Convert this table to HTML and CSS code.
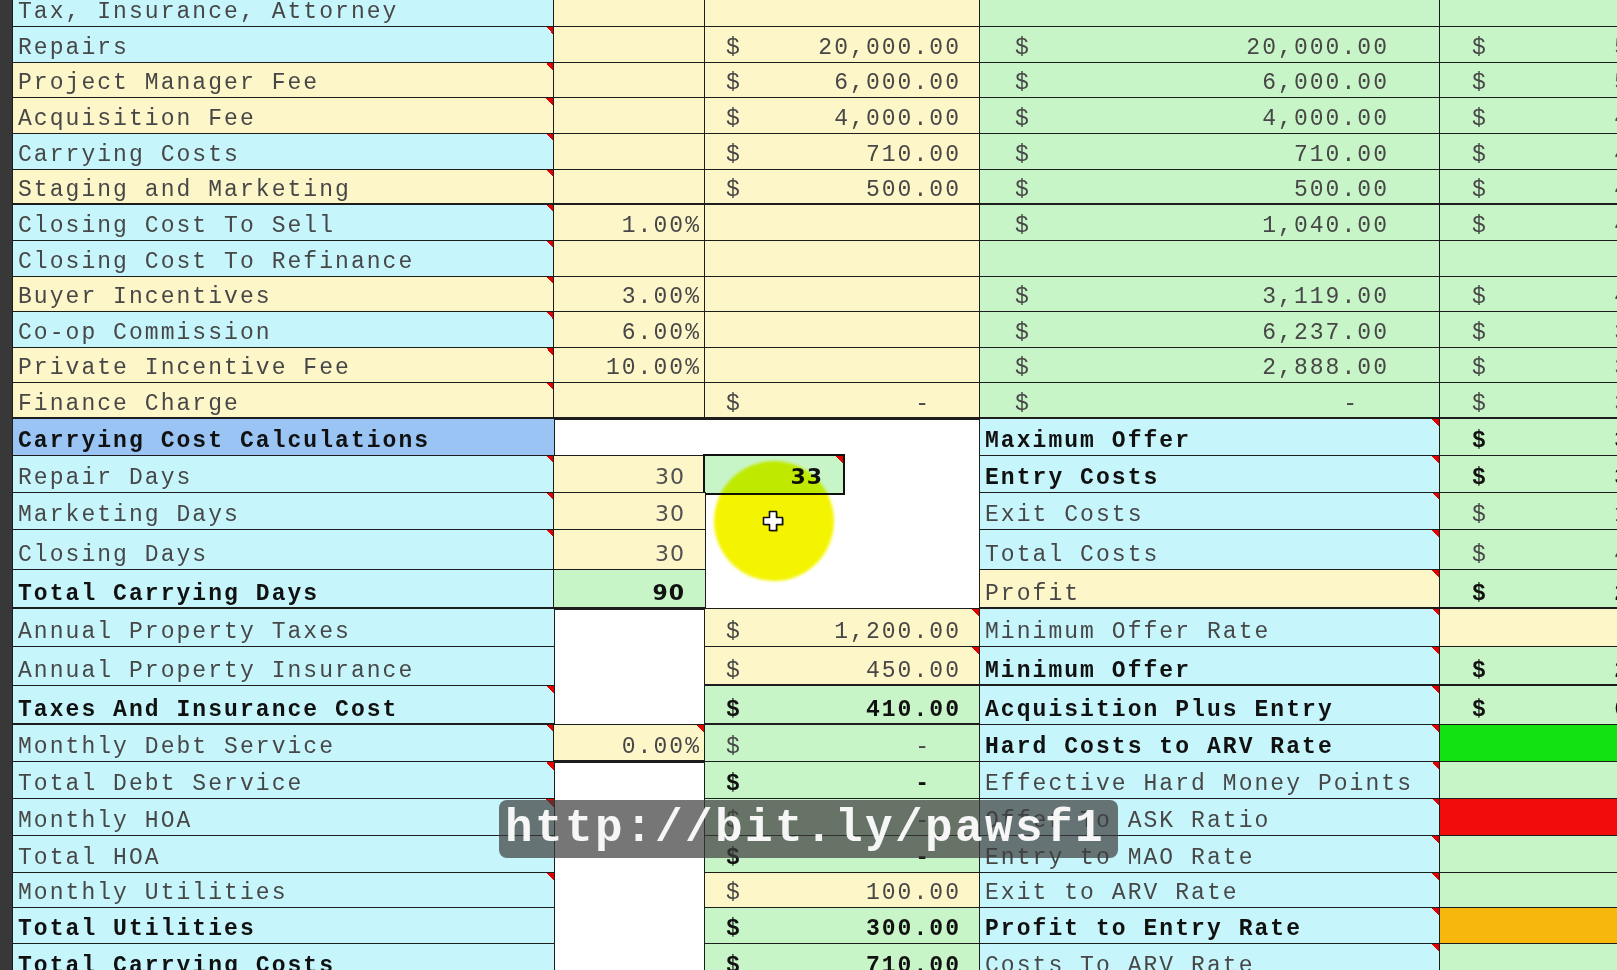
FILE: index.html
```html
<!DOCTYPE html>
<html lang="en">
<head>
<meta charset="utf-8">
<title>Deal Analysis Sheet</title>
<link rel="stylesheet" href="styles.css">
</head>
<body>
<div class="sheet">
  <div class="bar"></div>

  <!-- R0 -->
  <div class="c cy lbl">Tax, Insurance, Attorney</div>
  <div class="c ye"></div>
  <div class="c ye span2"></div>
  <div class="c gr"></div>
  <div class="c gr"></div>

  <!-- R1 -->
  <div class="c cy lbl tri">Repairs</div>
  <div class="c ye"></div>
  <div class="c ye span2 amt colC"><span>$</span><span>20,000.00</span></div>
  <div class="c gr amt colD"><span>$</span><span>20,000.00</span></div>
  <div class="c gr amt colE"><span>$</span><span>52,000.00</span></div>

  <!-- R2 -->
  <div class="c ye lbl tri">Project Manager Fee</div>
  <div class="c ye"></div>
  <div class="c ye span2 amt colC"><span>$</span><span>6,000.00</span></div>
  <div class="c gr amt colD"><span>$</span><span>6,000.00</span></div>
  <div class="c gr amt colE"><span>$</span><span>56,000.00</span></div>

  <!-- R3 -->
  <div class="c ye lbl tri">Acquisition Fee</div>
  <div class="c ye"></div>
  <div class="c ye span2 amt colC"><span>$</span><span>4,000.00</span></div>
  <div class="c gr amt colD"><span>$</span><span>4,000.00</span></div>
  <div class="c gr amt colE"><span>$</span><span>44,000.00</span></div>

  <!-- R4 -->
  <div class="c cy lbl tri">Carrying Costs</div>
  <div class="c ye"></div>
  <div class="c ye span2 amt colC"><span>$</span><span>710.00</span></div>
  <div class="c gr amt colD"><span>$</span><span>710.00</span></div>
  <div class="c gr amt colE"><span>$</span><span>47,100.00</span></div>

  <!-- R5 -->
  <div class="c ye lbl tri tb">Staging and Marketing</div>
  <div class="c ye tb"></div>
  <div class="c ye span2 amt colC tb"><span>$</span><span>500.00</span></div>
  <div class="c gr amt colD tb"><span>$</span><span>500.00</span></div>
  <div class="c gr amt colE tb"><span>$</span><span>45,000.00</span></div>

  <!-- R6 -->
  <div class="c cy lbl tri">Closing Cost To Sell</div>
  <div class="c ye pct">1.00%</div>
  <div class="c ye span2"></div>
  <div class="c gr amt colD"><span>$</span><span>1,040.00</span></div>
  <div class="c gr amt colE"><span>$</span><span>41,040.00</span></div>

  <!-- R7 -->
  <div class="c cy lbl tri">Closing Cost To Refinance</div>
  <div class="c ye"></div>
  <div class="c ye span2"></div>
  <div class="c gr"></div>
  <div class="c gr"></div>

  <!-- R8 -->
  <div class="c ye lbl tri">Buyer Incentives</div>
  <div class="c ye pct">3.00%</div>
  <div class="c ye span2"></div>
  <div class="c gr amt colD"><span>$</span><span>3,119.00</span></div>
  <div class="c gr amt colE"><span>$</span><span>43,119.00</span></div>

  <!-- R9 -->
  <div class="c cy lbl tri">Co-op Commission</div>
  <div class="c ye pct">6.00%</div>
  <div class="c ye span2"></div>
  <div class="c gr amt colD"><span>$</span><span>6,237.00</span></div>
  <div class="c gr amt colE"><span>$</span><span>36,237.00</span></div>

  <!-- R10 -->
  <div class="c ye lbl tri">Private Incentive Fee</div>
  <div class="c ye pct">10.00%</div>
  <div class="c ye span2"></div>
  <div class="c gr amt colD"><span>$</span><span>2,888.00</span></div>
  <div class="c gr amt colE"><span>$</span><span>32,888.00</span></div>

  <!-- R11 -->
  <div class="c ye lbl tri tb">Finance Charge</div>
  <div class="c ye tb"></div>
  <div class="c ye span2 amt colC tb"><span>$</span><span class="dash">-</span></div>
  <div class="c gr amt colD tb"><span>$</span><span class="dash">-</span></div>
  <div class="c gr amt colE tb"><span>$</span><span>30,000.00</span></div>

  <!-- R12 -->
  <div class="c bl lbl b">Carrying Cost Calculations</div>
  <div class="c wh span3"></div>
  <div class="c cy lbl b tri">Maximum Offer</div>
  <div class="c gr amt colE b"><span>$</span><span>35,000.00</span></div>

  <!-- R13 -->
  <div class="c cy lbl tri">Repair Days</div>
  <div class="c ye days">30</div>
  <div class="c gr days b sel tri">33</div>
  <div class="c wh"></div>
  <div class="c cy lbl b tri">Entry Costs</div>
  <div class="c gr amt colE b"><span>$</span><span>38,000.00</span></div>

  <!-- R14 -->
  <div class="c cy lbl tri">Marketing Days</div>
  <div class="c ye days">30</div>
  <div class="c wh span2"></div>
  <div class="c cy lbl tri">Exit Costs</div>
  <div class="c gr amt colE"><span>$</span><span>14,000.00</span></div>

  <!-- R15 -->
  <div class="c cy lbl tri">Closing Days</div>
  <div class="c ye days">30</div>
  <div class="c wh span2"></div>
  <div class="c cy lbl tri">Total Costs</div>
  <div class="c gr amt colE"><span>$</span><span>42,000.00</span></div>

  <!-- R16 -->
  <div class="c cy lbl b tb">Total Carrying Days</div>
  <div class="c gr days b tb">90</div>
  <div class="c wh span2"></div>
  <div class="c ye lbl tri tb">Profit</div>
  <div class="c gr amt colE b tb"><span>$</span><span>20,000.00</span></div>

  <!-- R17 -->
  <div class="c cy lbl">Annual Property Taxes</div>
  <div class="c wh"></div>
  <div class="c ye span2 amt colC tri"><span>$</span><span>1,200.00</span></div>
  <div class="c cy lbl tri">Minimum Offer Rate</div>
  <div class="c ye"></div>

  <!-- R18 -->
  <div class="c cy lbl">Annual Property Insurance</div>
  <div class="c wh"></div>
  <div class="c ye span2 amt colC tri tb"><span>$</span><span>450.00</span></div>
  <div class="c cy lbl b tri tb">Minimum Offer</div>
  <div class="c gr amt colE b tb"><span>$</span><span>25,000.00</span></div>

  <!-- R19 -->
  <div class="c cy lbl b tri tb">Taxes And Insurance Cost</div>
  <div class="c wh"></div>
  <div class="c gr span2 amt colC b tb"><span>$</span><span>410.00</span></div>
  <div class="c cy lbl b tri">Acquisition Plus Entry</div>
  <div class="c gr amt colE b"><span>$</span><span>63,000.00</span></div>

  <!-- R20 -->
  <div class="c cy lbl tri">Monthly Debt Service</div>
  <div class="c ye pct tri tb">0.00%</div>
  <div class="c gr span2 amt colC"><span>$</span><span class="dash">-</span></div>
  <div class="c cy lbl b tri">Hard Costs to ARV Rate</div>
  <div class="c g2"></div>

  <!-- R21 -->
  <div class="c cy lbl tri">Total Debt Service</div>
  <div class="c wh"></div>
  <div class="c gr span2 amt colC b"><span>$</span><span class="dash">-</span></div>
  <div class="c cy lbl tri">Effective Hard Money Points</div>
  <div class="c gr"></div>

  <!-- R22 -->
  <div class="c cy lbl tri">Monthly HOA</div>
  <div class="c wh"></div>
  <div class="c gr span2 amt colC"><span>$</span><span class="dash">-</span></div>
  <div class="c cy lbl tri">Offer To ASK Ratio</div>
  <div class="c rd"></div>

  <!-- R23 -->
  <div class="c cy lbl">Total HOA</div>
  <div class="c wh"></div>
  <div class="c gr span2 amt colC b"><span>$</span><span class="dash">-</span></div>
  <div class="c cy lbl tri">Entry to MAO Rate</div>
  <div class="c gr"></div>

  <!-- R24 -->
  <div class="c cy lbl tri">Monthly Utilities</div>
  <div class="c wh"></div>
  <div class="c ye span2 amt colC"><span>$</span><span>100.00</span></div>
  <div class="c cy lbl tri">Exit to ARV Rate</div>
  <div class="c gr"></div>

  <!-- R25 -->
  <div class="c cy lbl b">Total Utilities</div>
  <div class="c wh"></div>
  <div class="c gr span2 amt colC b"><span>$</span><span>300.00</span></div>
  <div class="c cy lbl b tri">Profit to Entry Rate</div>
  <div class="c or"></div>

  <!-- R26 -->
  <div class="c cy lbl b">Total Carrying Costs</div>
  <div class="c wh"></div>
  <div class="c gr span2 amt colC b"><span>$</span><span>710.00</span></div>
  <div class="c cy lbl tri">Costs To ARV Rate</div>
  <div class="c gr"></div>

  <div class="spot"></div>
  <svg class="cursor" width="22" height="22" viewBox="0 0 22 22" aria-hidden="true">
    <path d="M7.5 1.5h7v6h6v7h-6v6h-7v-6h-6v-7h6z" fill="#000" opacity="0.35" transform="translate(1.2 1.2)"/>
    <path d="M7.5 1.5h7v6h6v7h-6v6h-7v-6h-6v-7h6z" fill="#fff" stroke="#111" stroke-width="1.6" stroke-linejoin="round"/>
  </svg>
  <div class="tip">http://bit.ly/pawsf1</div>
</div>
</body>
</html>
```

FILE: styles.css
```css
html, body {
  margin: 0;
  padding: 0;
  width: 1617px;
  height: 970px;
  overflow: hidden;
  background: #ffffff;
}

.sheet {
  position: relative;
  display: grid;
  grid-template-columns: 13px 541px 151px 138px 137px 460px 368px;
  grid-template-rows: 27px 36px 35px 36px 36px 35px 36px 36px 35px 36px 35px 36px 37px 37px 37px 40px 39px 38px 39px 39px 37px 37px 37px 37px 35px 36px 37px;
  font-family: "Liberation Mono", "Courier New", monospace;
  font-size: 23px;
  letter-spacing: 2.05px;
  color: #474747;
}

.bar {
  grid-row: 1 / -1;
  grid-column: 1;
  background: #383838;
}

.c {
  box-sizing: border-box;
  display: flex;
  align-items: flex-end;
  line-height: 23px;
  padding: 0 5px 3px 5px;
  white-space: nowrap;
  background: var(--tri, none) top right / 8px 8px no-repeat, var(--bg, transparent);
}

.cy, .ye, .gr, .bl, .g2, .rd, .or {
  outline: 1px solid #1d1d1d;
}

.cy { --bg: #c6f6fb; }
.ye { --bg: #fdf6c9; }
.gr { --bg: #c8f5c8; }
.bl { --bg: #99c4f4; }
.g2 { --bg: #12e212; }
.rd { --bg: #f20c0c; }
.or { --bg: #f8b70c; }
.wh { --bg: transparent; }

.tri { --tri: linear-gradient(to bottom left, #e30000 50%, transparent 50%); }

.tb { box-shadow: inset 0 -2px 0 #1d1d1d; }

.span2 { grid-column: span 2; }
.span3 { grid-column: span 3; }

.lbl { padding-left: 5px; }

.b { font-weight: bold; color: #111; }

.amt { justify-content: space-between; }
.colC { padding-left: 21px; padding-right: 19px; }
.colD { padding-left: 35px; padding-right: 51px; }
.colE { padding-left: 32px; padding-right: 51px; }

.dash { margin-right: 30px; }

.pct {
  justify-content: flex-end;
  padding-right: 4px;
}

.days {
  justify-content: flex-end;
  padding-right: 20px;
  padding-bottom: 5px;
  font-family: "DejaVu Sans", Verdana, sans-serif;
  font-size: 22px;
  line-height: 22px;
  letter-spacing: 1px;
  color: #505050;
}
.days.b { color: #111; }

.sel {
  outline: 2px solid #111;
  outline-offset: 0;
}

.spot {
  position: absolute;
  left: 714px;
  top: 461px;
  width: 120px;
  height: 120px;
  border-radius: 50%;
  background: #f4f400;
  mix-blend-mode: multiply;
  filter: blur(1.5px);
}

.cursor {
  position: absolute;
  left: 762px;
  top: 510px;
}

.tip {
  position: absolute;
  left: 499px;
  top: 800px;
  width: 619px;
  height: 58px;
  box-sizing: border-box;
  padding: 0 0 0 6px;
  display: flex;
  align-items: center;
  border-radius: 8px;
  background: rgba(60, 60, 60, 0.7);
  color: #f6f6f6;
  font-family: "Liberation Mono", "Courier New", monospace;
  font-weight: bold;
  font-size: 46px;
  letter-spacing: 2.4px;
  line-height: 58px;
}
```
